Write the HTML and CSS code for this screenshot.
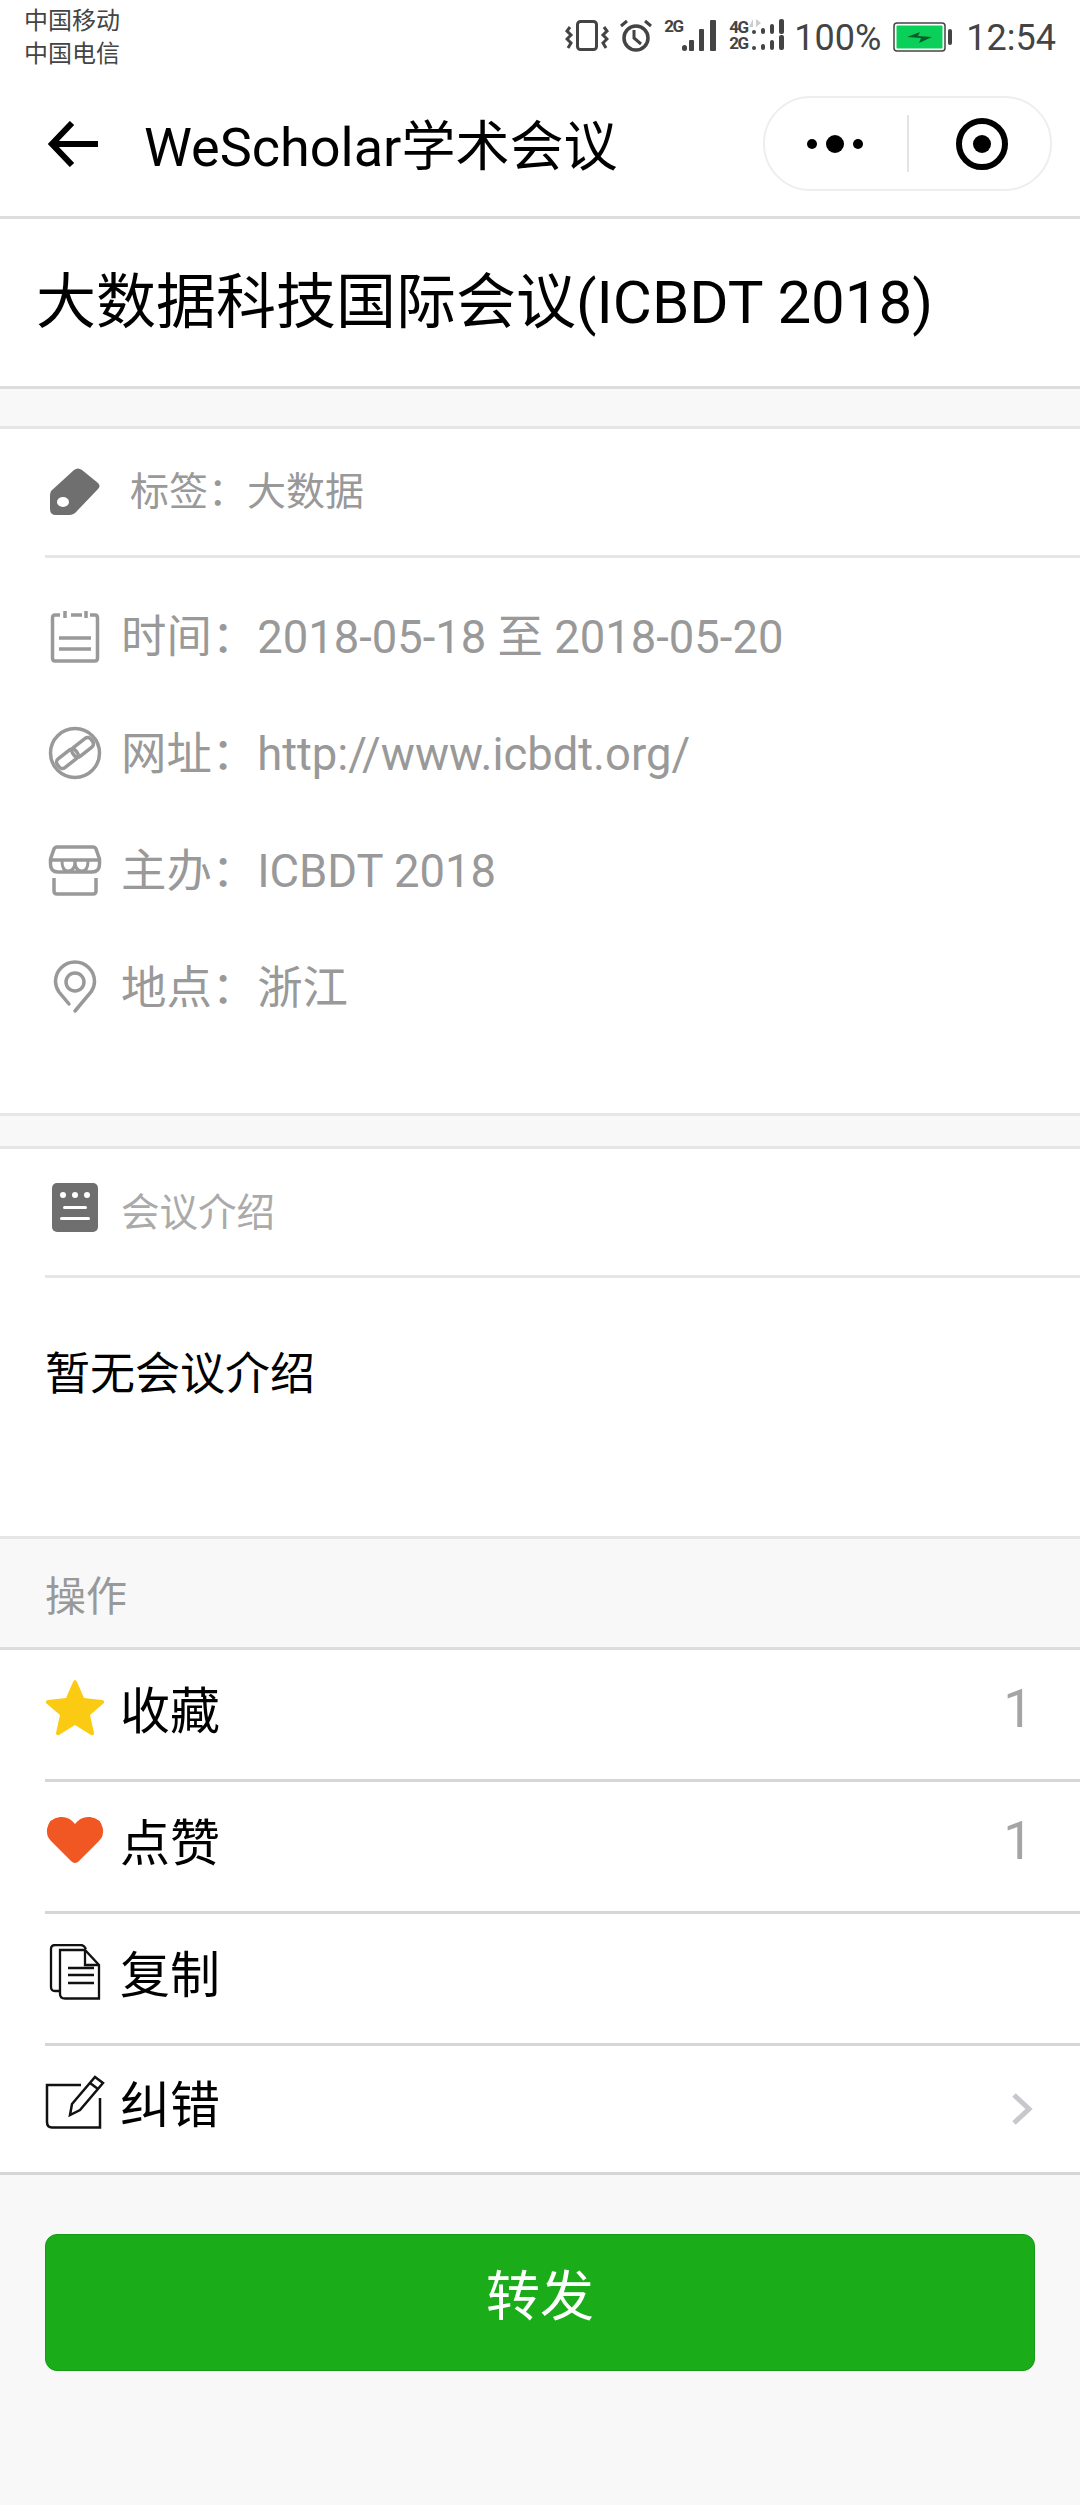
FILE: index.html
```html
<!DOCTYPE html>
<html lang="en">
<head>
    <meta charset="UTF-8">
    <meta name="viewport" content="width=device-width, initial-scale=1.0">
    <title>WeScholar学术会议</title>
    <link rel="stylesheet" href="styles.css">
</head>
<body>
    <div class="status-bar">
        <div class="carriers">
            <div>中国移动</div>
            <div>中国电信</div>
        </div>
        <div class="status-icons">
            <svg class="st-vibrate" width="44" height="36" viewBox="0 0 44 36" fill="none" stroke="#444" stroke-width="3">
                <rect x="12.500" y="4.500" width="19" height="28" rx="3"/>
                <path d="M5 10 L2 14 L6 18 L2 22 L6 26 L3 31"/>
                <path d="M39 10 L42 14 L38 18 L42 22 L38 26 L41 31"/>
            </svg>
            <svg class="st-alarm" width="34" height="34" viewBox="0 0 34 34" fill="none" stroke="#444" stroke-width="3.500">
                <circle cx="17" cy="20" r="12"/>
                <path d="M15 12 V20 L22 26" stroke-width="3"/>
                <path d="M2 8 L8 3 M32 8 L26 3" stroke-width="3"/>
            </svg>
            <div class="st-signal">
                <span class="net-label">2G</span>
                <svg width="34" height="34" viewBox="0 0 34 34" fill="#444">
                    <rect x="0" y="27" width="5" height="6" rx="2.500"/>
                    <rect x="7" y="22" width="5" height="11" rx="1"/>
                    <rect x="17" y="11" width="5" height="22" rx="1"/>
                    <rect x="28" y="2" width="6" height="31" rx="1"/>
                </svg>
            </div>
            <div class="st-dual">
                <div class="dual-line">
                    <span class="net-label">4G</span>
                    <svg width="37" height="16" viewBox="0 0 37 16" fill="#444">
                        <rect x="3" y="11" width="4" height="4" rx="2"/>
                        <rect x="12" y="9" width="4" height="6" rx="2"/>
                        <rect x="21" y="5" width="4" height="10" rx="2"/>
                        <rect x="30" y="0" width="5" height="15" rx="2"/>
                        <path d="M0 8 L4 0 V8 Z M7 0 V8 L12 4 Z" fill="#ccc"/>
                    </svg>
                </div>
                <div class="dual-line">
                    <span class="net-label">2G</span>
                    <svg width="37" height="16" viewBox="0 0 37 16" fill="#444">
                        <rect x="3" y="11" width="4" height="4" rx="2"/>
                        <rect x="12" y="9" width="4" height="6" rx="2"/>
                        <rect x="21" y="5" width="4" height="10" rx="2"/>
                        <rect x="30" y="0" width="5" height="15" rx="2"/>
                    </svg>
                </div>
            </div>
            <span class="st-percent">100%</span>
            <svg class="st-battery" width="60" height="30" viewBox="0 0 60 30">
                <rect x="1" y="1" width="51" height="28" rx="3" fill="#fff" stroke="#444" stroke-width="1.500"/>
                <rect x="3.500" y="3.500" width="46" height="23" rx="1" fill="#0ad05a"/>
                <rect x="55" y="7" width="4" height="16" rx="2" fill="#444"/>
                <path d="M14 15 L27 10 L25 14 L39 15 L26 21 L28 16 Z" fill="#0b5c2c"/>
            </svg>
            <span class="st-time">12:54</span>
        </div>
    </div>

    <header class="nav-bar">
        <svg class="back-icon" width="50" height="46" viewBox="0 0 50 46" fill="none" stroke="#000" stroke-width="6">
            <path d="M24 2 L4 23 L24 44"/>
            <path d="M5 23 H50"/>
        </svg>
        <h1 class="nav-title">WeScholar学术会议</h1>
        <div class="capsule">
            <div class="capsule-dots">
                <span class="dot-small"></span>
                <span class="dot-big"></span>
                <span class="dot-small"></span>
            </div>
            <div class="capsule-line"></div>
            <div class="capsule-target"><span></span></div>
        </div>
    </header>

    <section class="title-block">
        <h2>大数据科技国际会议(ICBDT 2018)</h2>
    </section>

    <section class="card info-card">
        <div class="card-head tag-head">
            <svg class="icon" width="54" height="50" viewBox="0 0 54 50">
                <path d="M3 24 L26 3 Q30 0 34 3 L50 16 Q53 19 50 22 L29 44 Q26 48 21 48 L8 48 Q2 48 2 42 L2 30 Q2 26 3 24 Z" fill="#6f6f6f"/>
                <ellipse cx="15" cy="35" rx="6" ry="5" fill="#fff"/>
            </svg>
            <span class="tag-text">标签：大数据</span>
        </div>
        <div class="info-list">
            <div class="info-row">
                <svg class="icon" width="54" height="54" viewBox="0 0 54 54" fill="none" stroke="#999" stroke-width="3.500">
                    <path d="M12 6 H7 Q4.500 6 4.500 9 V49 Q4.500 52 7 52 H47 Q49.500 52 49.500 49 V9 Q49.500 6 47 6 H42"/>
                    <path d="M23 6 H34 M17 2 V9 M38 2 V9 M11 29 H43 M11 40 H43"/>
                </svg>
                <span>时间：2018-05-18 至 2018-05-20</span>
            </div>
            <div class="info-row">
                <svg class="icon" width="54" height="54" viewBox="0 0 54 54" fill="none" stroke="#999" stroke-width="3.500">
                    <circle cx="27" cy="27" r="24.500"/>
                    <rect x="-11" y="-5.500" width="23" height="11" rx="4" transform="translate(19 33) rotate(-38)"/>
                    <rect x="-12" y="-5.500" width="23" height="11" rx="4" transform="translate(35 21) rotate(-38)"/>
                </svg>
                <span>网址：http://www.icbdt.org/</span>
            </div>
            <div class="info-row">
                <svg class="icon" width="54" height="52" viewBox="0 0 54 52" fill="none" stroke="#999" stroke-width="3.500">
                    <path d="M9 3 H45 Q47 3 48 5 L51.500 15 V20 Q51.500 28 44 28 H10 Q2.500 28 2.500 20 V15 L6 5 Q7 3 9 3 Z"/>
                    <path d="M3 16 H51"/>
                    <path d="M14 17 Q14 27 20 27 Q27 27 27 17 Q27 27 34 27 Q40 27 40 17" stroke-width="3"/>
                    <path d="M6 34 V47 Q6 50 9 50 H45 Q48 50 48 47 V34"/>
                </svg>
                <span>主办：ICBDT 2018</span>
            </div>
            <div class="info-row">
                <svg class="icon" width="54" height="56" viewBox="0 0 54 56" fill="none" stroke="#999" stroke-width="3.500" stroke-linecap="round">
                    <path d="M21 45 L11 33 Q7.500 28 7.500 22.500 A19.500 19.500 0 0 1 46.500 22.500 Q46.500 28 43 33 L27 52"/>
                    <circle cx="27" cy="23" r="9"/>
                </svg>
                <span>地点：浙江</span>
            </div>
        </div>
    </section>

    <section class="card intro-card">
        <div class="card-head">
            <svg class="icon intro-icon" width="54" height="50" viewBox="0 0 54 50">
                <rect x="4" y="0" width="46" height="49" rx="5" fill="#6f6f6f"/>
                <circle cx="15" cy="12" r="3" fill="#fff"/>
                <circle cx="27" cy="12" r="3" fill="#fff"/>
                <circle cx="39" cy="12" r="3" fill="#fff"/>
                <rect x="15" y="23" width="24" height="3" rx="1.500" fill="#fff"/>
                <rect x="12" y="34" width="30" height="3" rx="1.500" fill="#fff"/>
            </svg>
            <span class="intro-label">会议介绍</span>
        </div>
        <div class="intro-body">暂无会议介绍</div>
    </section>

    <div class="group-title">操作</div>

    <section class="action-list">
        <div class="action-row">
            <svg class="icon" width="60" height="58" viewBox="0 0 60 58">
                <path d="M30 1 Q31 1 32 3 L39 19 L57 21 Q60 22 59 24 L45 36 L49 54 Q49 57 46 56 L30 46 L14 56 Q11 57 11 54 L15 36 L1 24 Q0 22 3 21 L21 19 L28 3 Q29 1 30 1 Z" fill="#fbcb14"/>
            </svg>
            <span class="action-name">收藏</span>
            <span class="action-count">1</span>
        </div>
        <div class="action-row">
            <svg class="icon" width="60" height="48" viewBox="0 0 60 48">
                <path d="M30 47 Q28 47 26 45 L6 25 Q1 20 2 13 Q4 2 15 1 Q24 0 30 8 Q36 0 45 1 Q56 2 58 13 Q59 20 54 25 L34 45 Q32 47 30 47 Z" fill="#f15723"/>
            </svg>
            <span class="action-name">点赞</span>
            <span class="action-count">1</span>
        </div>
        <div class="action-row">
            <svg class="icon" width="60" height="56" viewBox="0 0 60 56" fill="none" stroke="#111" stroke-width="2.300">
                <path d="M14 47 H10 Q6 47 6 43 V5 Q6 1 10 1 H36 Q39 1 41 5"/>
                <path d="M15 6 H40 L54 21 V54.500 H20 Q15 54.500 15 50 Z"/>
                <path d="M40 6 V21 H54 M23 24 H49 M23 31 H49 M23 39 H49"/>
            </svg>
            <span class="action-name">复制</span>
        </div>
        <div class="action-row edit-row">
            <svg class="icon" width="60" height="54" viewBox="0 0 60 54" fill="none" stroke="#111" stroke-width="2.500">
                <path d="M36 10 H2 V47 Q2 52.500 7 52.500 H55 V23"/>
                <path d="M50 2 L58 8 L35 35 L25 40 L27 29 Z"/>
                <path d="M45 8 L53 14"/>
            </svg>
            <span class="action-name">纠错</span>
            <svg class="chevron" width="22" height="34" viewBox="0 0 22 34" fill="none" stroke="#c7c7cc" stroke-width="5">
                <path d="M3 3 L18 17 L3 31"/>
            </svg>
        </div>
    </section>

    <div class="footer-btn-wrap">
        <button class="share-btn">转发</button>
    </div>
</body>
</html>
```

FILE: styles.css
```css
* {
    box-sizing: border-box;
}
body {
    margin: 0;
    width: 1080px;
    height: 2505px;
    overflow: hidden;
    background-color: #f8f8f8;
    font-family: Roboto, "Noto Sans CJK SC", sans-serif;
    color: #000;
}

/* status bar */
.status-bar {
    height: 84px;
    background: white;
    display: flex;
    justify-content: space-between;
    padding: 5px 24px 0 24px;
}
.carriers {
    font-size: 24px;
    line-height: 33px;
    color: #444;
}
.status-icons {
    display: flex;
    align-items: center;
    height: 60px;
    color: #444;
}
.st-vibrate {
    margin-right: 10px;
}
.st-alarm {
    margin-right: 11px;
}
.st-signal {
    display: flex;
    align-items: flex-start;
    margin-right: 13px;
}
.net-label {
    font-size: 17px;
    line-height: 16px;
    font-weight: 700;
    letter-spacing: -1.500px;
    width: 18px;
}
.st-dual {
    display: flex;
    flex-direction: column;
    margin-right: 8px;
}
.dual-line {
    display: flex;
    height: 16px;
}
.dual-line .net-label {
    width: 20px;
}
.st-percent {
    font-size: 36px;
    padding-top: 5px;
    margin-right: 12px;
}
.st-battery {
    margin-top: 4px;
    margin-right: 13px;
}
.st-time {
    font-size: 36px;
    padding-top: 5px;
}

/* nav bar */
.nav-bar {
    height: 135px;
    background: white;
    border-bottom: 3px solid #ddd;
    display: flex;
    align-items: center;
    padding: 0 28px 0 48px;
    position: relative;
}
.back-icon {
    margin-right: 46px;
    margin-top: -12px;
}
.nav-title {
    margin: -15px 0 0 0;
    font-size: 54px;
    font-weight: 400;
    flex: 1;
}
.capsule {
    width: 289px;
    height: 95px;
    margin-top: -13px;
    border: 2px solid #eee;
    border-radius: 48px;
    display: flex;
    align-items: center;
}
.capsule-dots {
    width: 142px;
    padding-right: 2px;
    display: flex;
    align-items: center;
    justify-content: center;
    gap: 9px;
}
.dot-small {
    width: 10px;
    height: 10px;
    border-radius: 50%;
    background: #000;
}
.dot-big {
    width: 18px;
    height: 18px;
    border-radius: 50%;
    background: #000;
}
.capsule-line {
    width: 2px;
    height: 57px;
    background: #e4e4e4;
}
.capsule-target {
    flex: 1;
    padding-left: 4px;
    display: flex;
    justify-content: center;
}
.capsule-target span {
    width: 52px;
    height: 52px;
    border: 6px solid #000;
    border-radius: 50%;
    display: flex;
    align-items: center;
    justify-content: center;
}
.capsule-target span::after {
    content: "";
    width: 18px;
    height: 18px;
    border-radius: 50%;
    background: #000;
}

/* title */
.title-block {
    height: 170px;
    background: white;
    border-bottom: 3px solid #ddd;
    padding: 0 0 12px 36px;
    display: flex;
    align-items: center;
}
.title-block h2 {
    margin: 0;
    font-size: 60px;
    font-weight: 400;
}

/* cards */
.card {
    background: white;
    border-top: 3px solid #e6e6e6;
    border-bottom: 3px solid #e6e6e6;
}
.info-card {
    margin-top: 37px;
    height: 690px;
}
.intro-card {
    margin-top: 30px;
    height: 393px;
}
.card-head {
    margin-left: 45px;
    padding-left: 3px;
    height: 129px;
    border-bottom: 3px solid #e6e6e6;
    display: flex;
    align-items: center;
}
.icon {
    flex: none;
}
.intro-icon {
    margin-bottom: 8px;
}
.tag-text {
    margin-left: 28px;
    padding-bottom: 8px;
    font-size: 39px;
    color: #999;
}
.intro-label {
    margin-left: 19px;
    padding-bottom: 6px;
    font-size: 38.500px;
    color: #aaa;
}
.info-list {
    padding: 19px 0 0 48px;
}
.info-row {
    height: 117px;
    display: flex;
    align-items: center;
    gap: 19px;
    font-size: 45.400px;
    color: #999;
}
.info-row span {
    padding-bottom: 6px;
}
.intro-body {
    padding: 67px 0 0 45px;
    font-size: 45px;
    line-height: 60px;
}

/* actions */
.group-title {
    height: 111px;
    padding: 33px 0 0 45px;
    font-size: 41px;
    line-height: 50px;
    color: #999;
    border-bottom: 3px solid #ddd;
}
.action-list {
    background: white;
    border-bottom: 3px solid #d6d6d6;
}
.action-row {
    margin-left: 45px;
    height: 132px;
    padding-right: 47px;
    border-bottom: 3px solid #d6d6d6;
    display: flex;
    align-items: center;
    gap: 15px;
}
.action-row .icon {
    margin-bottom: 14px;
}
.edit-row {
    border-bottom: none;
    height: 126px;
}
.action-name {
    flex: 1;
    padding-bottom: 16px;
    font-size: 50px;
}
.action-count {
    padding-bottom: 12px;
    font-size: 53px;
    color: #a5a5a5;
}

/* bottom button */
.footer-btn-wrap {
    padding: 59px 45px 0 45px;
}
.share-btn {
    width: 100%;
    height: 137px;
    background-color: #1aad19;
    color: white;
    border: 1px solid #179b16;
    border-radius: 12px;
    font-family: Roboto, "Noto Sans CJK SC", sans-serif;
    font-size: 54px;
    padding: 0 0 20px 0;
}
```
